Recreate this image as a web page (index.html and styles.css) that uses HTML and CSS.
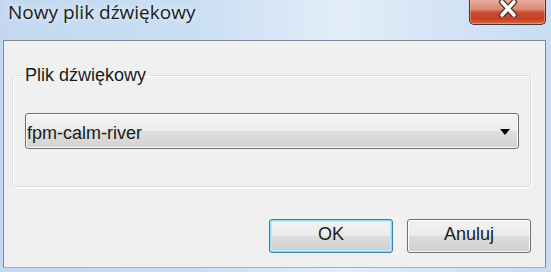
FILE: index.html
```html
<!DOCTYPE html>
<html lang="pl">
<head>
<meta charset="utf-8">
<title>Nowy plik dźwiękowy</title>
<link rel="stylesheet" href="styles.css">
</head>
<body>
<div class="window">
  <div class="titlebar">
    <div class="title">Nowy plik dźwiękowy</div>
    <div class="close">
      <svg width="20" height="17" viewBox="0 0 20 17">
        <path d="M4 2 L16 15 M16 2 L4 15" stroke="#4a2a24" stroke-width="6" stroke-linecap="round"/>
        <path d="M4 2 L16 15 M16 2 L4 15" stroke="#ffffff" stroke-width="3.6" stroke-linecap="round"/>
      </svg>
    </div>
  </div>
  <div class="client">
    <fieldset class="group">
      <legend class="legend">Plik dźwiękowy</legend>
      <div class="combo">
        <span class="combo-text">fpm-calm-river</span>
        <span class="arrow"></span>
      </div>
    </fieldset>
    <div class="buttons">
      <button class="btn btn-default">OK</button>
      <button class="btn">Anuluj</button>
    </div>
  </div>
</div>
</body>
</html>
```

FILE: styles.css
```css
html, body {
  margin: 0;
  padding: 0;
}
body {
  width: 551px;
  height: 272px;
  overflow: hidden;
  font-family: "Liberation Sans", Arial, sans-serif;
}
.window {
  width: 551px;
  height: 272px;
  display: flex;
  flex-direction: column;
  background: linear-gradient(90deg, #c3d8f0 0%, #cadef3 35%, #e2edf9 62%, #d8e7f6 75%, #c9dcf2 100%);
}
.titlebar {
  height: 40px;
  display: flex;
  justify-content: space-between;
  align-items: flex-start;
  padding-left: 8px;
  padding-right: 5px;
  flex: none;
}
.title {
  font-family: "Open Sans", "Noto Sans", sans-serif;
  font-size: 19px;
  line-height: 24px;
  margin-top: 0;
  color: #1c1c1c;
  text-shadow: 0 0 6px rgba(255,255,255,0.9);
}
.close {
  width: 77px;
  height: 26px;
  margin-top: -1px;
  box-sizing: border-box;
  border: 1px solid #5b2a22;
  border-top: none;
  border-radius: 0 0 5px 5px;
  background: linear-gradient(180deg, #eab0a2 0%, #dc8b77 40%, #c94b30 55%, #c63f25 80%, #d9693f 100%);
  box-shadow: inset 0 0 0 1px rgba(255,200,180,0.45);
  display: flex;
  align-items: center;
  justify-content: center;
}
.close svg {
  display: block;
  margin-top: -6px;
}
.client {
  flex: 1;
  margin: 0 5px 4px 3px;
  background: #f0f0f0;
  border: 1px solid #7b8a9b;
  border-bottom-color: #9cb0c6;
  display: flex;
  flex-direction: column;
  padding: 24px 14px 0 8px;
}
.group {
  margin: 0;
  padding: 0 11px 0 12px;
  height: 122px;
  box-sizing: border-box;
  border: 1px solid #d5dfe5;
  border-radius: 3px;
  box-shadow: inset 1px 1px 0 #ffffff, 1px 1px 0 #ffffff;
}
.legend {
  margin-left: -2px;
  padding: 0 4px 0 2px;
  font-size: 18px;
  line-height: 21px;
  color: #1a1a1a;
}
.combo {
  margin-top: 27px;
  height: 36px;
  box-sizing: border-box;
  border: 1px solid #707070;
  border-radius: 3px;
  background: linear-gradient(180deg, #f3f3f3 0%, #ececec 50%, #dfdfdf 51%, #d2d2d2 100%);
  box-shadow: inset 0 0 0 1px #fbfbfb;
  display: flex;
  align-items: center;
  justify-content: space-between;
  padding: 4px 8px 0 1px;
}
.combo-text {
  font-size: 18px;
  line-height: 21px;
  color: #1a1a1a;
}
.arrow {
  width: 0;
  height: 0;
  border-left: 5px solid transparent;
  border-right: 5px solid transparent;
  border-top: 6px solid #000000;
  margin-top: -2px;
}
.buttons {
  display: flex;
  justify-content: flex-end;
  gap: 14px;
  margin-top: 32px;
}
.btn {
  width: 124px;
  height: 34px;
  box-sizing: border-box;
  margin: 0;
  border: 1px solid #707070;
  border-radius: 3px;
  background: linear-gradient(180deg, #f2f2f2 0%, #ebebeb 50%, #dddddd 51%, #cfcfcf 100%);
  box-shadow: inset 0 0 0 1px #fcfcfc;
  font-family: "Liberation Sans", Arial, sans-serif;
  font-size: 18px;
  line-height: 21px;
  color: #1a1a1a;
  padding: 0 0 4px 0;
}
.btn-default {
  border-color: #3c7fb1;
  box-shadow: inset 0 0 0 1px #8fd6f4, inset 0 0 0 2px #c5ebfa;
}
```
